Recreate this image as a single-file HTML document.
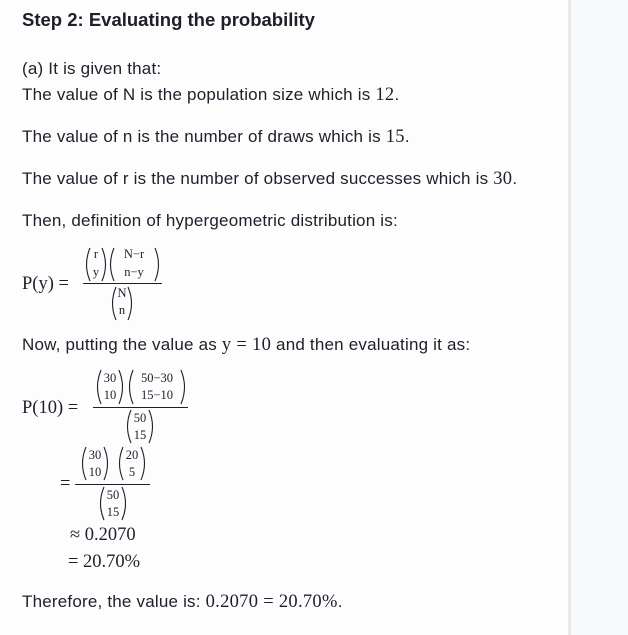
<!DOCTYPE html>
<html><head><meta charset="utf-8"><style>
body{margin:0;width:628px;height:635px;background:#fdfdfe;position:relative;overflow:hidden;font-family:"Liberation Sans",sans-serif;color:#1d1f2a;}
.side{position:absolute;left:568px;top:0;width:3px;height:635px;background:#e8e8ea}
.side2{position:absolute;left:571px;top:0;width:57px;height:635px;background:#f8f9fa}
.t{position:absolute;left:22px;font-size:17px;white-space:nowrap;line-height:20px;letter-spacing:0.2px}
.m{font-family:"Liberation Serif",serif;font-size:18.5px;letter-spacing:0.3px}
svg{position:absolute;left:0;top:0}
svg text{font-family:"Liberation Serif",serif;fill:#1d1f2a}
.s{font-size:12.5px}
.b{font-size:18.5px}
path{fill:none;stroke:#1d1f2a;stroke-width:1.1}
</style></head><body>
<div class="side"></div><div class="side2"></div>
<div class="t" style="top:10px;font-size:18.5px;font-weight:bold;letter-spacing:0">Step 2: Evaluating the probability</div>
<div class="t" style="top:59px">(a) It is given that:</div>
<div class="t" style="top:85px">The value of N is the population size which is <span class="m">12</span>.</div>
<div class="t" style="top:127px">The value of n is the number of draws which is <span class="m">15</span>.</div>
<div class="t" style="top:169px">The value of r is the number of observed successes which is <span class="m">30</span>.</div>
<div class="t" style="top:211px">Then, definition of hypergeometric distribution is:</div>
<div class="t" style="top:335px">Now, putting the value as <span class="m">y = 10</span> and then evaluating it as:</div>
<div class="t" style="top:592px">Therefore, the value is: <span class="m">0.2070 = 20.70%</span>.</div>

<svg width="628" height="635">
<text class="b" x="22" y="289">P(y) =</text>
<path d="M90 248 Q83 264.5 90 281"/><text class="s" x="96" y="258" text-anchor="middle">r</text><text class="s" x="96" y="276" text-anchor="middle">y</text><path d="M102 248 Q109 264.5 102 281"/>
<path d="M114 248 Q107 264.5 114 281"/><text class="s" x="134" y="258" text-anchor="middle">N−r</text><text class="s" x="134" y="276" text-anchor="middle">n−y</text><path d="M155 248 Q162 264.5 155 281"/>
<rect x="83" y="283" width="79" height="1" fill="#1d1f2a"/>
<path d="M116 287 Q109 303.5 116 320"/><text class="s" x="122" y="297" text-anchor="middle">N</text><text class="s" x="122" y="314" text-anchor="middle">n</text><path d="M128 287 Q135 303.5 128 320"/>

<text class="b" x="22" y="413">P(10) =</text>
<path d="M101 370 Q94 387 101 404"/><text class="s" x="110" y="382" text-anchor="middle">30</text><text class="s" x="110" y="399" text-anchor="middle">10</text><path d="M119 370 Q126 387 119 404"/>
<path d="M133 370 Q126 387 133 404"/><text class="s" x="157" y="382" text-anchor="middle">50−30</text><text class="s" x="157" y="399" text-anchor="middle">15−10</text><path d="M181 370 Q188 387 181 404"/>
<rect x="93" y="407" width="95" height="1" fill="#1d1f2a"/>
<path d="M131 410 Q124 426.5 131 443"/><text class="s" x="140" y="422" text-anchor="middle">50</text><text class="s" x="140" y="439" text-anchor="middle">15</text><path d="M149 410 Q156 426.5 149 443"/>

<text class="b" x="60" y="489">=</text>
<path d="M86 447 Q79 463.5 86 480"/><text class="s" x="95" y="459" text-anchor="middle">30</text><text class="s" x="95" y="476" text-anchor="middle">10</text><path d="M104 447 Q111 463.5 104 480"/>
<path d="M123 447 Q116 463.5 123 480"/><text class="s" x="132" y="459" text-anchor="middle">20</text><text class="s" x="132" y="476" text-anchor="middle">5</text><path d="M141 447 Q148 463.5 141 480"/>
<rect x="75" y="484" width="75" height="1" fill="#1d1f2a"/>
<path d="M104 487 Q97 503.5 104 520"/><text class="s" x="113" y="499" text-anchor="middle">50</text><text class="s" x="113" y="516" text-anchor="middle">15</text><path d="M122 487 Q129 503.5 122 520"/>

<text class="b" x="70" y="540">≈ 0.2070</text>
<text class="b" x="68" y="567">= 20.70%</text>
</svg>
</body></html>
